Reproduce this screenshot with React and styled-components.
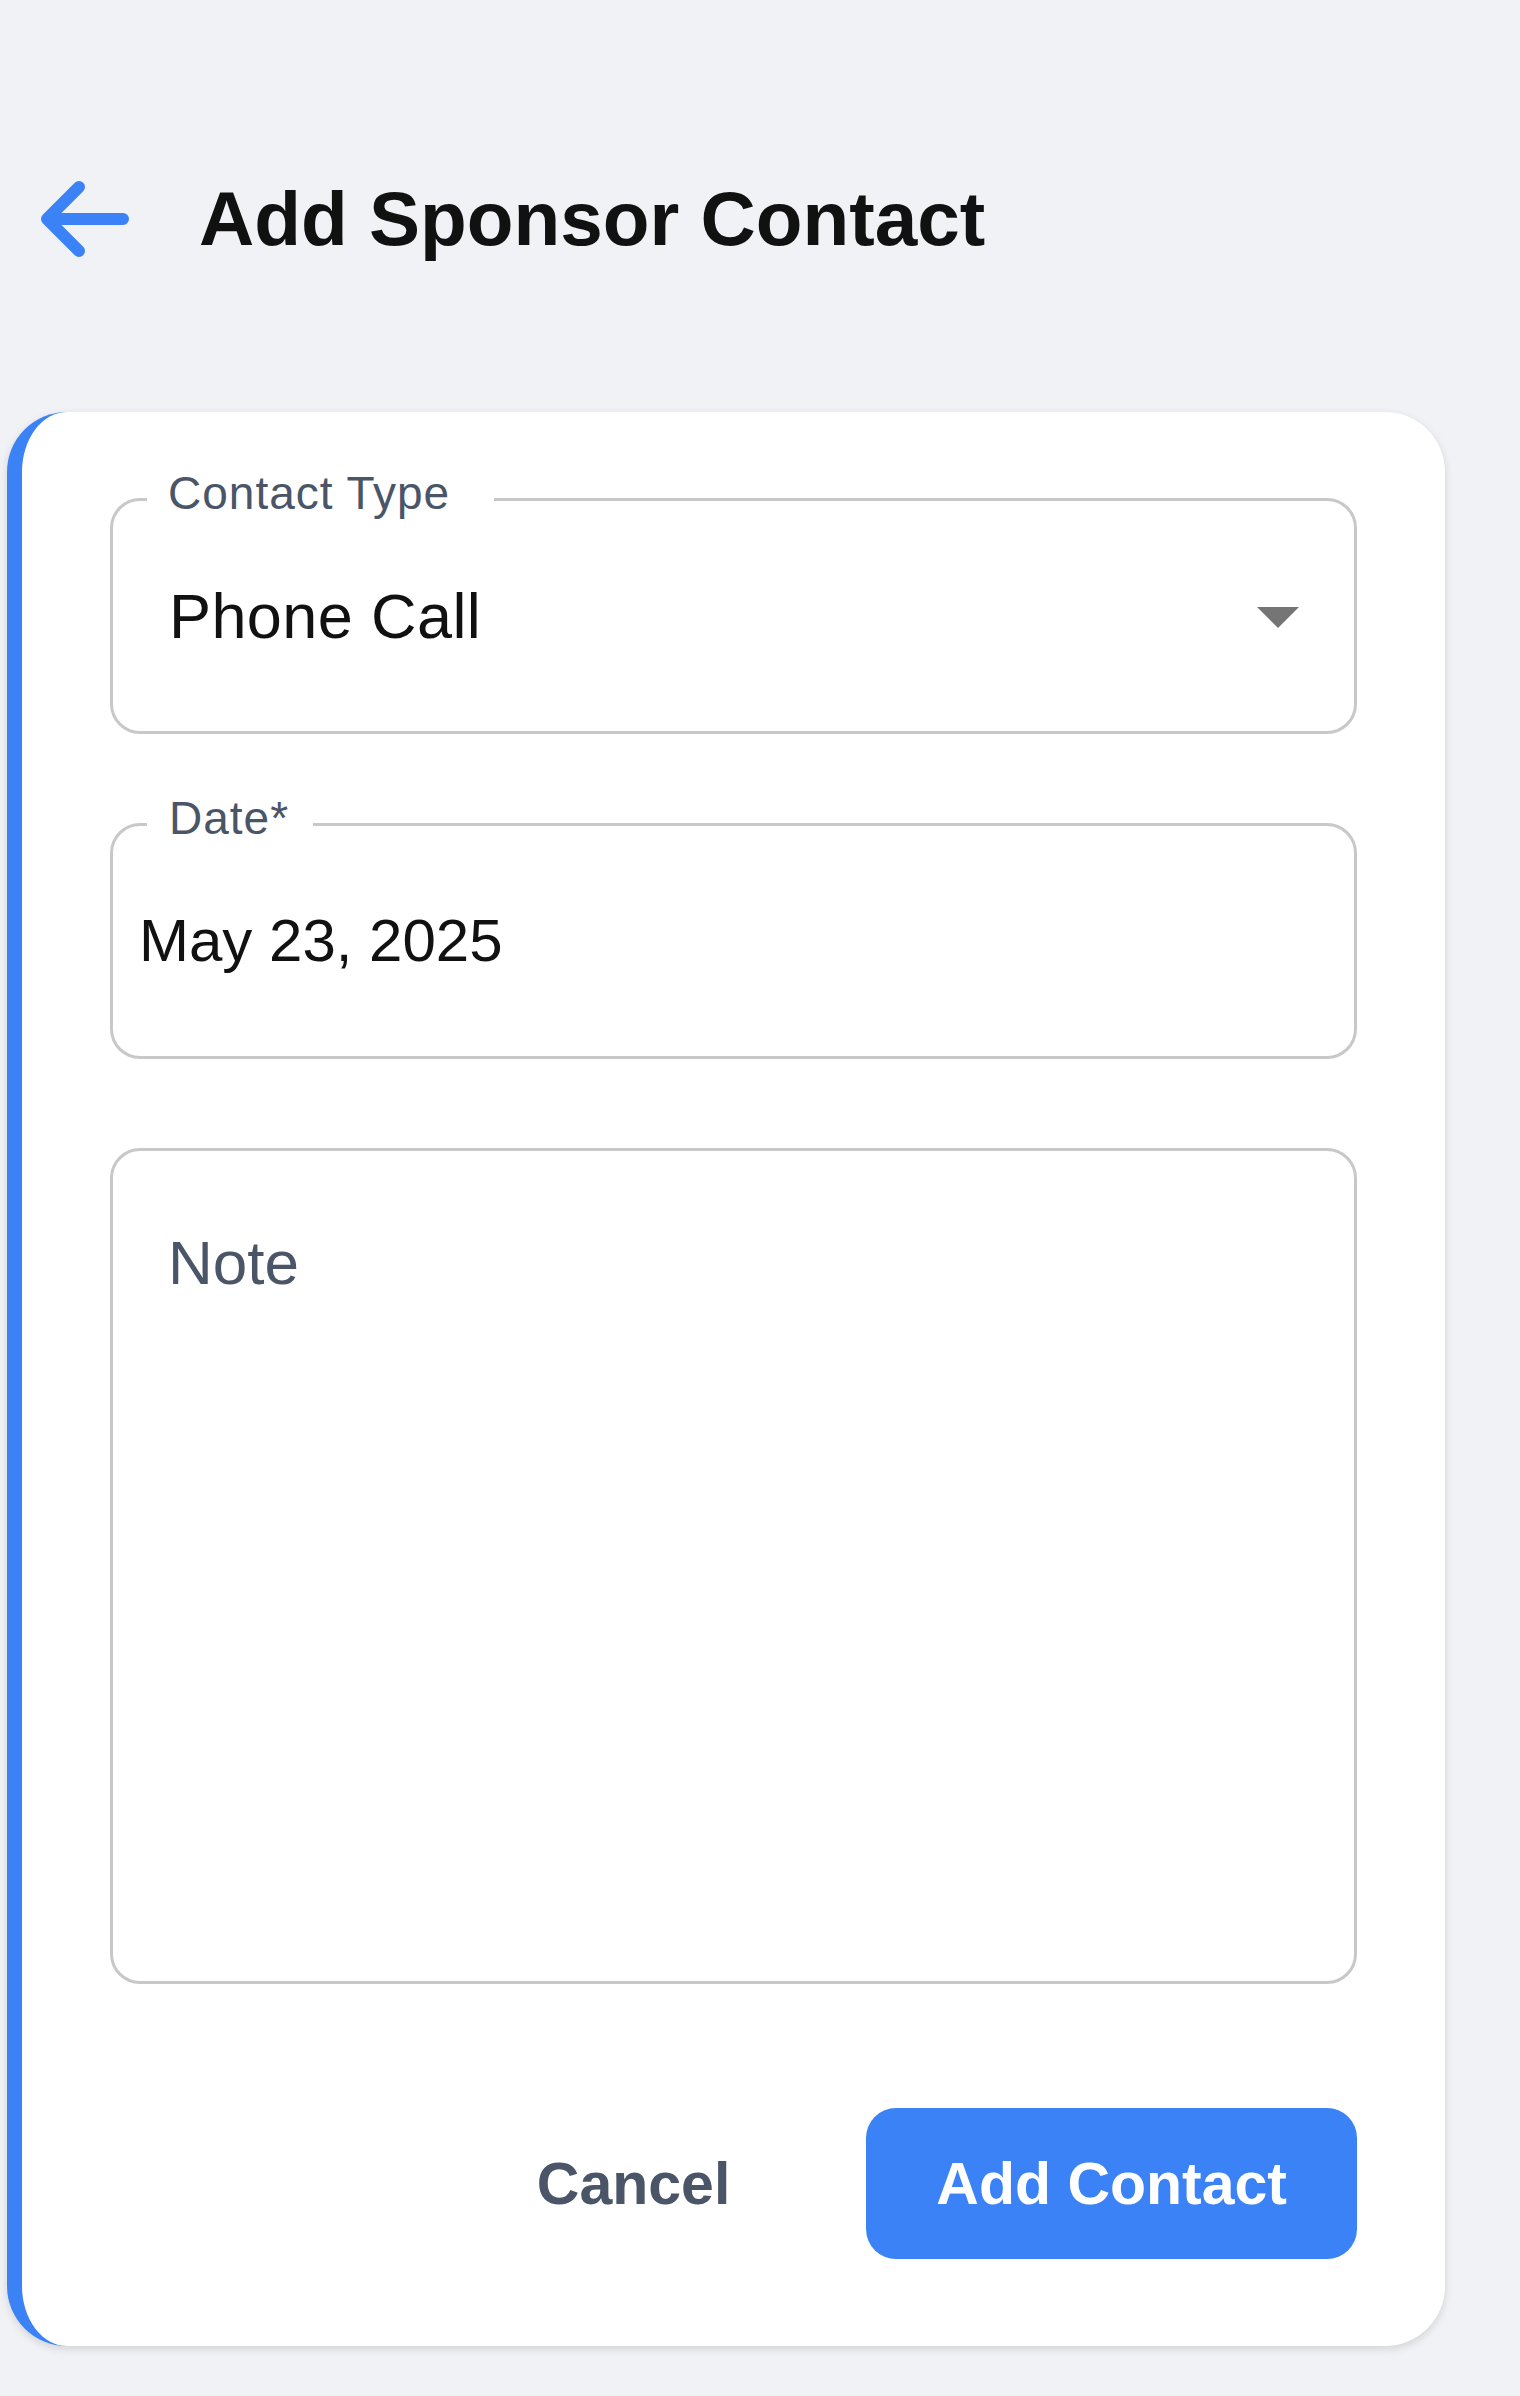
import React from "react";
import styled, { createGlobalStyle } from "styled-components";

const GlobalStyle = createGlobalStyle`
  html, body {
    margin: 0;
    padding: 0;
    background: #f0f2f5;
    font-family: "Liberation Sans", Arial, Helvetica, sans-serif;
  }
  * { box-sizing: border-box; }
`;

const Page = styled.div`
  min-height: 2396px;
  padding: 180px 75px 40px 7px;
  background: #f0f2f5;
`;

const Header = styled.header`
  display: flex;
  align-items: center;
  height: 78px;
  margin-left: 33px;
  gap: 69px;
  margin-bottom: 154px;
`;

const BackButton = styled.button`
  display: flex;
  align-items: center;
  justify-content: center;
  padding: 0;
  border: 0;
  background: transparent;
  cursor: pointer;
  width: 90px;
  height: 78px;
`;

const Title = styled.h1`
  margin: 0;
  font-size: 76.5px;
  line-height: 1;
  font-weight: 700;
  color: #111111;
`;

const Card = styled.section`
  background: #ffffff;
  border-left: 15px solid #3b82f6;
  border-radius: 60px;
  box-shadow: 0 3px 9px rgba(0, 0, 0, 0.13);
  padding: 86px 88px 87px 88px;
  display: flex;
  flex-direction: column;
`;

const Fields = styled.div`
  display: flex;
  flex-direction: column;
  gap: 89px;
`;

const Field = styled.div`
  position: relative;
  height: ${(p) => p.$height}px;
  border: 3px solid #c8c8c8;
  border-radius: 30px;
  display: flex;
  align-items: center;
  padding-left: ${(p) => p.$padLeft}px;
  padding-right: 55px;
`;

const FloatingLabel = styled.span`
  position: absolute;
  top: -31px;
  left: 34px;
  padding: 0 ${(p) => p.$padRight}px 0 ${(p) => p.$padLeft}px;
  background: #ffffff;
  font-size: 46px;
  letter-spacing: 1px;
  line-height: 1;
  color: #4a5568;
  white-space: nowrap;
`;

const Value = styled.span`
  flex: 1;
  font-size: ${(p) => p.$size}px;
  letter-spacing: ${(p) => p.$spacing || 0}px;
  color: #111111;
  line-height: 1;
`;

const Caret = styled.svg`
  width: 42px;
  height: 21px;
  flex: none;
  margin-top: 2px;
`;

const NoteArea = styled.textarea`
  display: block;
  width: 100%;
  height: 836px;
  border: 3px solid #c8c8c8;
  border-radius: 30px;
  padding: 65px 55px;
  font-family: "Liberation Sans", Arial, Helvetica, sans-serif;
  font-size: 62px;
  line-height: 1.5;
  color: #111111;
  resize: none;
  outline: none;
  background: #ffffff;

  &::placeholder {
    color: #4a5568;
    opacity: 1;
  }
`;

const Actions = styled.div`
  display: flex;
  justify-content: flex-end;
  align-items: center;
  gap: 66px;
  margin-top: 124px;
`;

const ActionButton = styled.button`
  height: 151px;
  padding: 0 70px;
  border: 0;
  border-radius: 30px;
  font-family: "Liberation Sans", Arial, Helvetica, sans-serif;
  font-size: 59px;
  font-weight: 700;
  cursor: pointer;
  background: ${(p) => (p.$primary ? "#3b82f6" : "transparent")};
  color: ${(p) => (p.$primary ? "#ffffff" : "#4a5568")};
`;

function BackArrow() {
  return (
    <svg width="90" height="78" viewBox="0 0 90 78" fill="none">
      <path
        d="M83 39 H7 M39 7 L7 39 L39 71"
        stroke="#3b82f6"
        strokeWidth="12"
        strokeLinecap="round"
        strokeLinejoin="round"
      />
    </svg>
  );
}

export default function App() {
  return (
    <>
      <GlobalStyle />
      <Page>
        <Header>
          <BackButton aria-label="Back">
            <BackArrow />
          </BackButton>
          <Title>Add Sponsor Contact</Title>
        </Header>

        <Card>
          <Fields>
            <Field $height={236} $padLeft={56}>
              <FloatingLabel $padLeft={21} $padRight={44}>
                Contact Type
              </FloatingLabel>
              <Value $size={63} $spacing={0.4}>
                Phone Call
              </Value>
              <Caret viewBox="0 0 42 21">
                <path d="M0 0 H42 L21 21 Z" fill="#757575" />
              </Caret>
            </Field>

            <Field $height={236} $padLeft={26}>
              <FloatingLabel $padLeft={22} $padRight={24}>
                Date*
              </FloatingLabel>
              <Value $size={60}>May 23, 2025</Value>
            </Field>

            <NoteArea placeholder="Note" />
          </Fields>

          <Actions>
            <ActionButton type="button">Cancel</ActionButton>
            <ActionButton type="button" $primary>
              Add Contact
            </ActionButton>
          </Actions>
        </Card>
      </Page>
    </>
  );
}
